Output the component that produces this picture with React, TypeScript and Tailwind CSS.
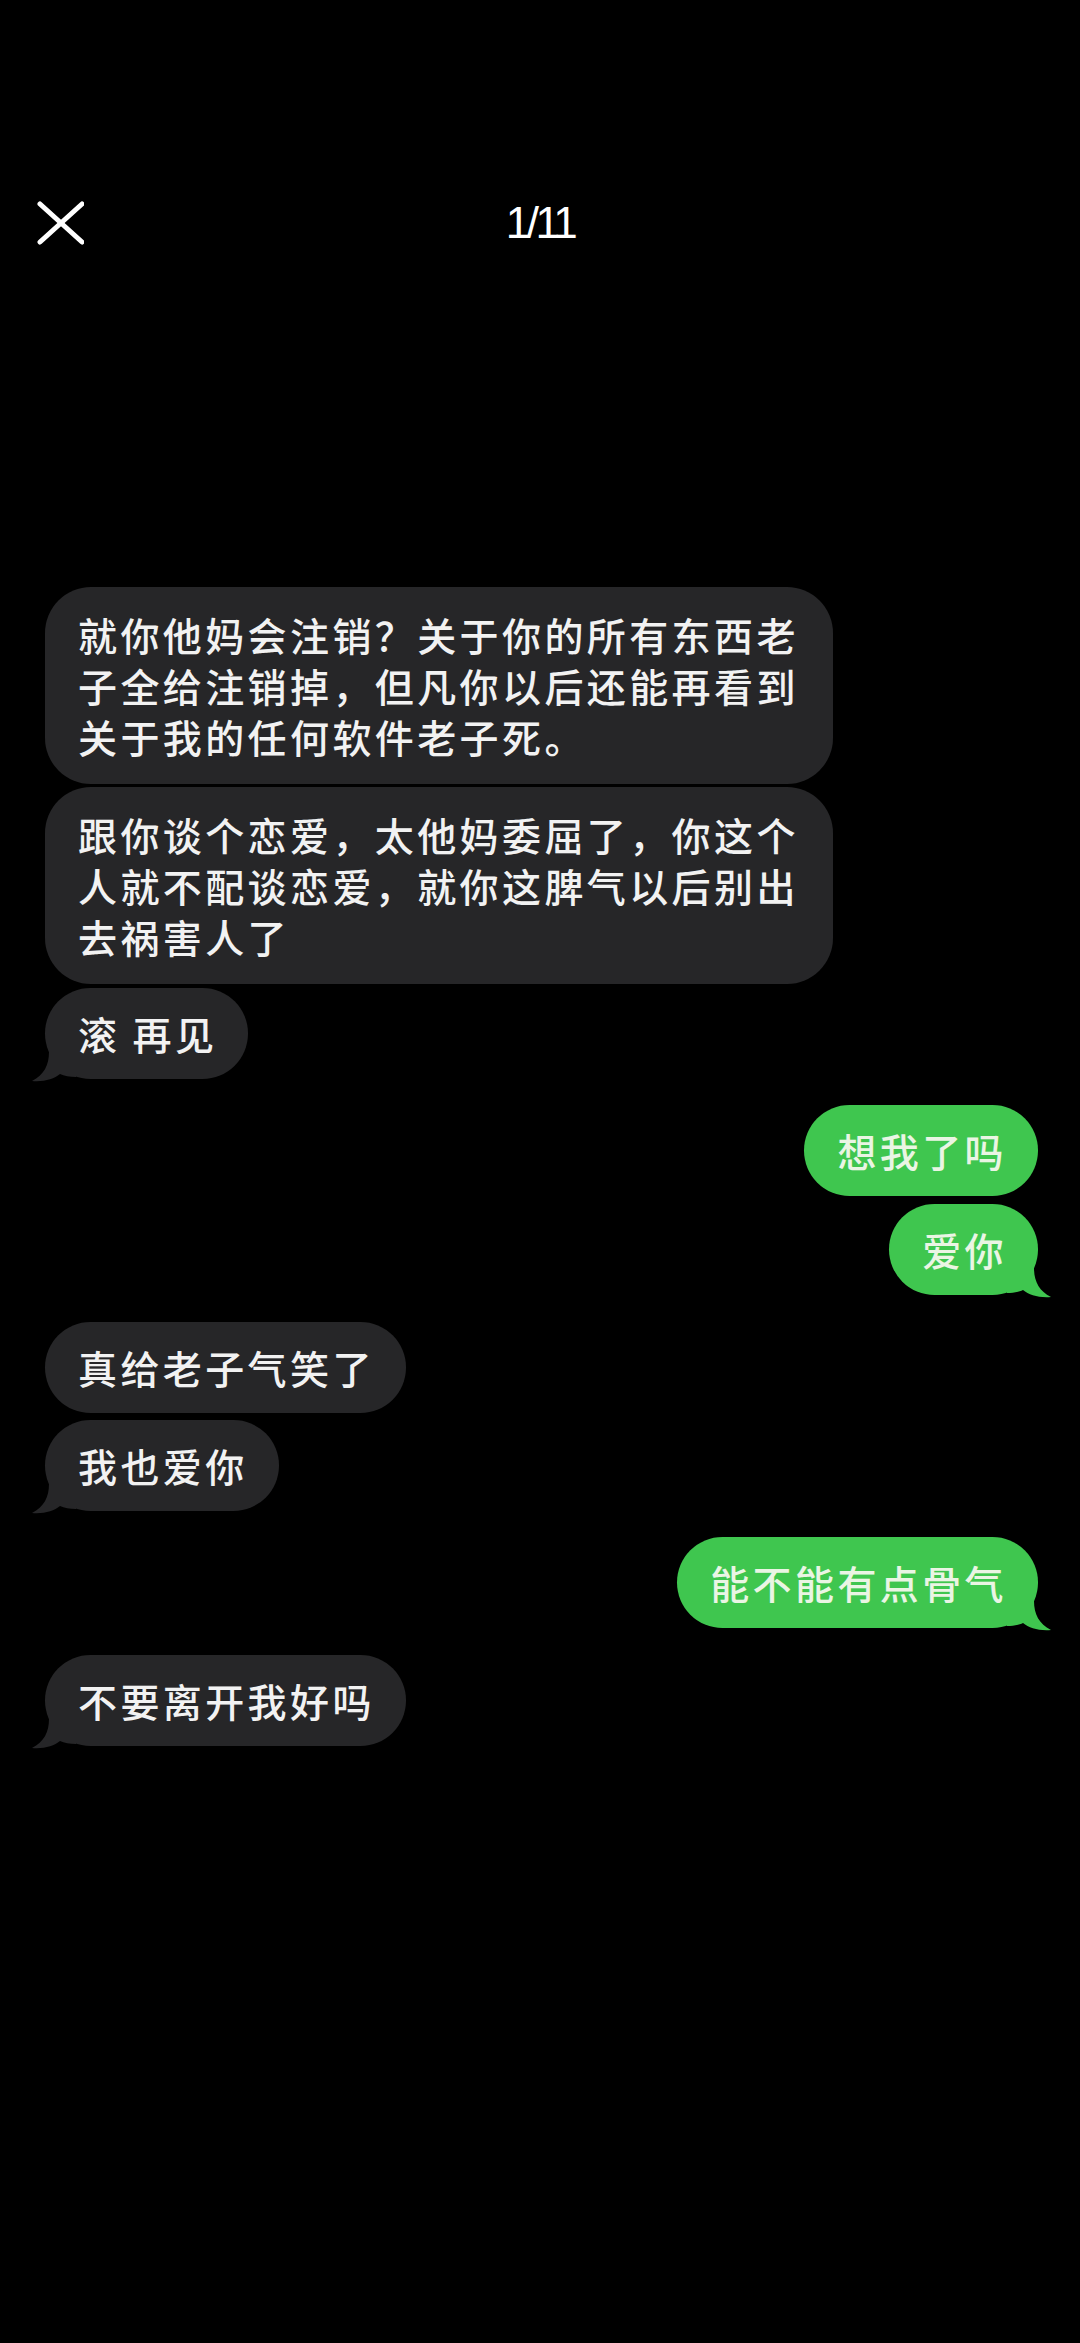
import React from "react";

const cjk = { fontFamily: '"Noto Sans CJK SC", "Noto Sans", sans-serif' };

function Tail({ side, color }: { side: "left" | "right"; color: string }) {
  return (
    <svg
      width="44"
      height="30"
      viewBox="0 0 44 30"
      className={
        side === "left"
          ? "absolute left-[-13px] bottom-[-3px]"
          : "absolute right-[-13px] bottom-[-3px] -scale-x-100"
      }
    >
      <path
        d="M17 0 C17 13 12 23 0 29 C12 30 22 27 28 22 C32 24 38 25 44 25 L44 0 Z"
        fill={color}
      />
    </svg>
  );
}

function Dark({
  lines,
  tail,
  mt,
  multi,
}: {
  lines: string[];
  tail?: boolean;
  mt: string;
  multi?: boolean;
}) {
  return (
    <div
      className={`relative self-start bg-[#262628] text-[#f2f2f2] rounded-[46px] pl-[33px] pr-[31px] ${
        multi ? "py-[22px] w-[788px]" : "py-[20px]"
      } ${mt}`}
    >
      <div
        className="text-[39px] font-medium leading-[51px] tracking-[3.4px] whitespace-nowrap"
        style={cjk}
      >
        {lines.map((l, i) => (
          <div key={i}>{l}</div>
        ))}
      </div>
      {tail && <Tail side="left" color="#262628" />}
    </div>
  );
}

function Green({ text, tail, mt }: { text: string; tail?: boolean; mt: string }) {
  return (
    <div
      className={`relative self-end bg-[#3fc64f] text-[#eaf5e4] rounded-[46px] pl-[33px] pr-[31px] py-[20px] ${mt}`}
    >
      <div
        className="text-[39px] font-medium leading-[51px] tracking-[3.4px] whitespace-nowrap"
        style={cjk}
      >
        {text}
      </div>
      {tail && <Tail side="right" color="#3fc64f" />}
    </div>
  );
}

export default function App() {
  return (
    <div className="w-full h-[2343px] bg-black overflow-hidden">
      <div className="grid grid-cols-[1fr_auto_1fr] items-center pt-[200px] pl-[36px]">
        <svg width="48" height="46" viewBox="0 0 48 46">
          <line x1="4" y1="4" x2="46" y2="42" stroke="#ffffff" strokeWidth="5" strokeLinecap="round" />
          <line x1="46" y1="4" x2="4" y2="42" stroke="#ffffff" strokeWidth="5" strokeLinecap="round" />
        </svg>
        <div
          className="text-white text-[44px] leading-[46px] tracking-[-3.5px] pr-[36px]"
          style={{ fontFamily: '"Liberation Sans", Arial, sans-serif' }}
        >
          1/11
        </div>
        <div />
      </div>

      <div className="flex flex-col pl-[45px] pr-[42px] mt-[341px]">
        <Dark
          multi
          mt="mt-0"
          lines={[
            "就你他妈会注销？关于你的所有东西老",
            "子全给注销掉，但凡你以后还能再看到",
            "关于我的任何软件老子死。",
          ]}
        />
        <Dark
          multi
          mt="mt-[3px]"
          lines={[
            "跟你谈个恋爱，太他妈委屈了，你这个",
            "人就不配谈恋爱，就你这脾气以后别出",
            "去祸害人了",
          ]}
        />
        <Dark mt="mt-[4px]" tail lines={["滚 再见"]} />
        <Green mt="mt-[26px]" text="想我了吗" />
        <Green mt="mt-[8px]" tail text="爱你" />
        <Dark mt="mt-[27px]" lines={["真给老子气笑了"]} />
        <Dark mt="mt-[7px]" tail lines={["我也爱你"]} />
        <Green mt="mt-[26px]" tail text="能不能有点骨气" />
        <Dark mt="mt-[27px]" tail lines={["不要离开我好吗"]} />
      </div>
    </div>
  );
}
